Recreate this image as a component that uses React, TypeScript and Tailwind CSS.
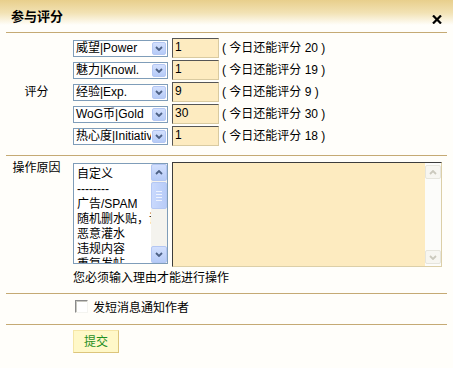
import React from 'react';

const rows = [
  { label: '威望|Power', value: '1', left: 20 },
  { label: '魅力|Knowl.', value: '1', left: 19 },
  { label: '经验|Exp.', value: '9', left: 9 },
  { label: 'WoG币|Gold', value: '30', left: 30 },
  { label: '热心度|Initiative', value: '1', left: 18 },
];

const reasons = ['自定义', '--------', '广告/SPAM', '随机删水贴，请勿灌水', '恶意灌水', '违规内容', '重复发帖'];

function Chevron({ up = false, color = '#4d6185' }: { up?: boolean; color?: string }) {
  return (
    <svg width="8" height="5" viewBox="0 0 8 5">
      <path d={up ? 'M1 4 L4 1 L7 4' : 'M1 1 L4 4 L7 1'} fill="none" stroke={color} strokeWidth="1.8" />
    </svg>
  );
}

function XpButton({ up = false, className = '' }: { up?: boolean; className?: string }) {
  return (
    <div
      className={`flex items-center justify-center rounded-[2px] border border-[#b4c7f3] bg-[linear-gradient(180deg,#d3e0fd,#b6cbf7)] ${className}`}
    >
      <Chevron up={up} />
    </div>
  );
}

function Select({ label }: { label: string }) {
  return (
    <div className="flex h-[17px] w-[95px] shrink-0 border border-[#7f9db9] bg-white">
      <div className="flex-1 overflow-hidden whitespace-nowrap pl-[2px] leading-[15px]">{label}</div>
      <XpButton className="m-[1px] w-[14px] shrink-0" />
    </div>
  );
}

export default function App() {
  return (
    <div className="h-[368px] w-[453px] bg-[#fffefa] text-[12px] text-black font-['Liberation_Sans','Noto_Sans_CJK_SC',sans-serif]">
      <div className="flex h-[32px] items-start justify-between bg-[linear-gradient(180deg,#e8cf8c_0%,#f2e2b4_40%,#fffefa_78%)] px-[11px]">
        <div className="mt-[9px] text-[13px] font-bold leading-[16px]">参与评分</div>
        <svg className="mt-[15px]" width="10" height="9" viewBox="0 0 10 9">
          <path d="M1 0.5 L9 8.5 M9 0.5 L1 8.5" stroke="#000" strokeWidth="2.2" />
        </svg>
      </div>

      <div className="px-[6px]">
        {/* rating rows */}
        <div className="flex border-t border-[#c5aa74] pb-[8px] pt-[4px]">
          <div className="flex w-[61px] items-center justify-center">评分</div>
          <div className="ml-[6px] flex flex-col">
            {rows.map((r) => (
              <div key={r.label} className="flex h-[22px] items-center">
                <Select label={r.label} />
                <div className="ml-[4px] h-[20px] w-[47px] border-b border-l border-r border-t border-b-[#d9caa0] border-l-[#555] border-r-[#d9caa0] border-t-[#555] bg-[#fdebc0] pl-[2px] pt-[1px] leading-[14px]">
                  {r.value}
                </div>
                <div className="ml-[3px] whitespace-pre leading-[14px]">{`( 今日还能评分 ${r.left} )`}</div>
              </div>
            ))}
          </div>
        </div>

        {/* reason */}
        <div className="flex border-t border-[#c5aa74] pb-[7px] pt-[6px]">
          <div className="w-[61px] text-center leading-[12px]">操作原因</div>
          <div className="ml-[6px] flex flex-col">
            <div className="flex items-start">
              <div className="mt-[1px] flex h-[101px] w-[95px] border border-[#7f9db9] bg-white">
                <div className="h-full flex-1 overflow-hidden pl-[3px] pt-[3px] leading-[15px]">
                  {reasons.map((t) => (
                    <div key={t} className="whitespace-nowrap">
                      {t}
                    </div>
                  ))}
                </div>
                <div className="flex w-[16px] shrink-0 flex-col bg-[#f4f3ee]">
                  <XpButton up className="h-[17px]" />
                  <div className="mt-[1px] flex h-[27px] flex-col items-center justify-center gap-[2px] rounded-[2px] border border-[#b4c7f3] bg-[linear-gradient(90deg,#c9d9fd,#b8ccf8)]">
                    <div className="h-px w-[6px] bg-[#eef3fe]" />
                    <div className="h-px w-[6px] bg-[#eef3fe]" />
                    <div className="h-px w-[6px] bg-[#eef3fe]" />
                    <div className="h-px w-[6px] bg-[#eef3fe]" />
                  </div>
                  <div className="flex-1" />
                  <XpButton className="h-[17px]" />
                </div>
              </div>
              <div className="ml-[4px] flex h-[105px] w-[270px] border-b border-l border-r border-t border-b-[#dccfa8] border-l-[#3c3c3c] border-r-[#dccfa8] border-t-[#3c3c3c] bg-[#fdebc0]">
                <div className="flex-1" />
                <div className="flex w-[16px] flex-col justify-between bg-[#fcfcfa] py-[2px]">
                  <div className="flex h-[14px] items-center justify-center rounded-[2px] border border-[#e6e5dd] bg-[#f7f6f1]">
                    <Chevron up color="#cbc9bd" />
                  </div>
                  <div className="flex h-[14px] items-center justify-center rounded-[2px] border border-[#e6e5dd] bg-[#f7f6f1]">
                    <Chevron color="#cbc9bd" />
                  </div>
                </div>
              </div>
            </div>
            <div className="mt-[3px] leading-[16px]">您必须输入理由才能进行操作</div>
          </div>
        </div>

        {/* notify */}
        <div className="flex h-[31px] border-t border-[#c5aa74] pt-[6px]">
          <div className="ml-[69px] h-[13px] w-[13px] border-b border-l border-r border-t border-b-[#f4f4f0] border-l-[#8a8a8a] border-r-[#f4f4f0] border-t-[#8a8a8a] bg-white">
            <div className="h-full w-full border-l border-t border-[#c8c8c0]" />
          </div>
          <div className="ml-[5px] leading-[16px]">发短消息通知作者</div>
        </div>

        {/* submit */}
        <div className="border-t border-[#c5aa74] pl-[67px] pt-[5px]">
          <button className="flex h-[23px] w-[46px] items-center justify-center border border-[#f5e6a6] border-b-[#dcc57c] border-r-[#dcc57c] bg-[#fff8c8] text-[12px] leading-[14px] text-[#1f8f1f]">
            提交
          </button>
        </div>
      </div>
    </div>
  );
}
